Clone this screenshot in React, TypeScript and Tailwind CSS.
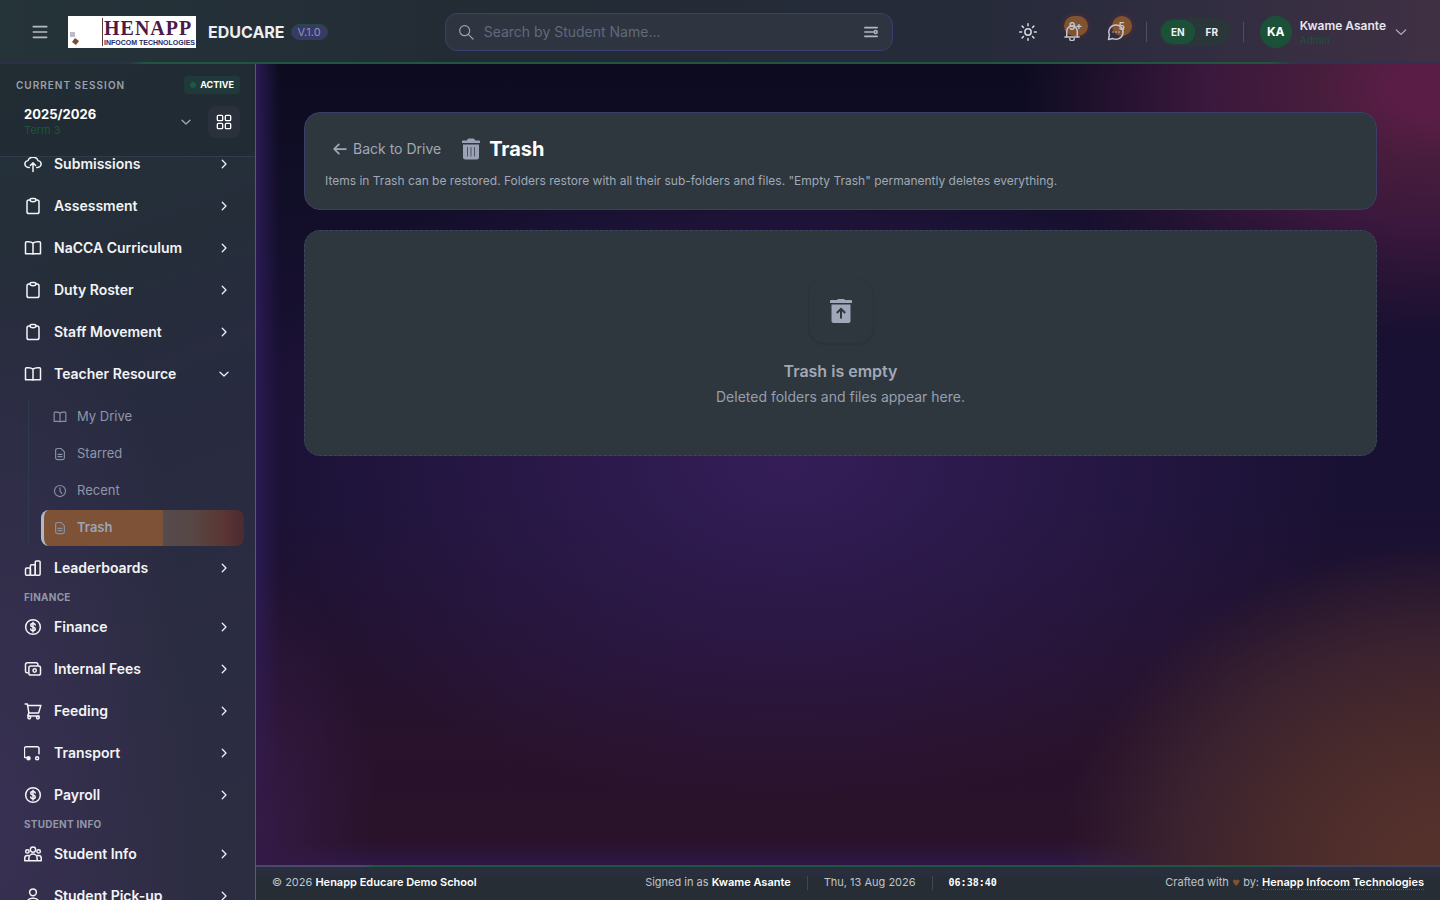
import { ReactNode } from "react";
import { clsx } from "clsx";

const paths: Record<string, ReactNode> = {
  upload: (
    <>
      <path d="M7 16.5H6a4.5 4.5 0 0 1-.6-9A6.6 6.6 0 0 1 12 3a6.6 6.6 0 0 1 6.6 4.5 4.5 4.5 0 0 1-.6 9h-1" />
      <path d="M12 22V10.500M8.500 14 12 10.500l3.500 3.500" />
    </>
  ),
  clipboard: (
    <>
      <path d="M8 4H6.500A2.500 2.500 0 0 0 4 6.500v13A2.500 2.500 0 0 0 6.500 22h11a2.500 2.500 0 0 0 2.500-2.500v-13A2.500 2.500 0 0 0 17.500 4H16" />
      <path d="M8 4c0-1.200.8-2 2-2h4c1.200 0 2 .8 2 2 0 1.200-1.600 2.200-4 2.200S8 5.200 8 4Z" />
    </>
  ),
  book: (
    <path d="M12 5.500V20M12 5.500C10.500 4.200 8.500 3.500 6 3.500H3.500A1.500 1.500 0 0 0 2 5v14.500h7c1.400 0 2.300.2 3 .5.700-.3 1.600-.5 3-.5h7V5a1.500 1.500 0 0 0-1.500-1.500H18c-2.500 0-4.500.7-6 2Z" />
  ),
  file: (
    <>
      <path d="M13.500 2.500h-6A3 3 0 0 0 4.500 5.500v13a3 3 0 0 0 3 3h9a3 3 0 0 0 3-3v-10Z" />
      <path d="M8.500 12.500h7M8.500 16.500h7" />
    </>
  ),
  clock: (
    <>
      <circle cx="12" cy="12" r="9.500" />
      <path d="M12 6.500V12l3 4" />
    </>
  ),
  bars: (
    <>
      <rect x="2" y="12" width="6.500" height="9.500" rx="1.500" />
      <rect x="8.500" y="7.500" width="6.500" height="14" rx="1.500" />
      <rect x="15" y="2.500" width="6.500" height="19" rx="1.500" />
    </>
  ),
  dollar: (
    <>
      <circle cx="12" cy="12" r="9.800" />
      <path d="M15 9.300c-.2-1.300-1.400-2-3-2s-3 .8-3 2.200c0 3.300 6 1.700 6 5 0 1.400-1.300 2.200-3 2.200s-2.900-.8-3-2.100M12 5.500v13" />
    </>
  ),
  cash: (
    <>
      <path d="M5 17H4a2 2 0 0 1-2-2V6a2.500 2.500 0 0 1 2.500-2.500H16A2.500 2.500 0 0 1 18.500 6v1" />
      <rect x="6.500" y="8" width="15.500" height="12" rx="2.500" />
      <circle cx="14.200" cy="14" r="2.200" />
    </>
  ),
  cart: (
    <>
      <path d="M1.500 2.500h3l2 12h13l3-10H5M6.500 14.500 5 18.500h15" />
      <circle cx="7" cy="20.800" r="1.800" />
      <circle cx="18.500" cy="20.800" r="1.800" />
    </>
  ),
  bus: (
    <>
      <path d="M3 18H2a1.500 1.500 0 0 1-1.500-1.500V6A2.500 2.500 0 0 1 3 3.500h14.500A2.500 2.500 0 0 1 20 6v7" />
      <circle cx="6" cy="19" r="2" fill="currentColor" />
      <circle cx="17.500" cy="19" r="2" />
    </>
  ),
  group: (
    <>
      <circle cx="12" cy="6" r="3.500" />
      <circle cx="4.500" cy="8.500" r="2.300" />
      <circle cx="19.500" cy="8.500" r="2.300" />
      <path d="M6.500 21v-3.500a5.500 5.500 0 0 1 11 0V21ZM6 14H4.500A3.500 3.500 0 0 0 1 17.500V21h22v-3.500a3.500 3.500 0 0 0-3.500-3.500H18" />
    </>
  ),
  user: (
    <>
      <circle cx="12" cy="7" r="4.500" />
      <path d="M4 22v-1a7 7 0 0 1 7-6h2a7 7 0 0 1 7 6v1" />
    </>
  ),
  right: <path d="m8.500 4.500 7.500 7.500-7.500 7.500" />,
  down: <path d="m4 8.500 8 7.500 8-7.500" />,
  back: <path d="M22 12H3M10 4l-8 8 8 8" />,
  menu: <path d="M2 4h20M2 12h20M2 20h20" />,
  search: (
    <>
      <circle cx="10" cy="10" r="7.500" />
      <path d="m15.500 15.500 7 7" />
    </>
  ),
  filter: (
    <>
      <path d="M1.500 4.500h21M1.500 12h14M1.500 19.500h21" />
      <circle cx="20" cy="12" r="2.500" />
    </>
  ),
  grid: (
    <>
      <rect x="2" y="2" width="8" height="8" rx="1.500" />
      <rect x="14" y="2" width="8" height="8" rx="1.500" />
      <rect x="2" y="14" width="8" height="8" rx="1.500" />
      <rect x="14" y="14" width="8" height="8" rx="1.500" />
    </>
  ),
  sun: (
    <>
      <circle cx="12" cy="12" r="4.200" />
      <path d="M12 1v2.500M12 20.500V23M1 12h2.500M20.500 12H23M4.200 4.200 6 6M18 18l1.800 1.800M4.200 19.800 6 18M18 6l1.800-1.800" />
    </>
  ),
  bell: (
    <>
      <path d="M5 18V11a7 7 0 0 1 14 0v7M2.500 18.500h19" />
      <path d="M9 20.500a3 3 0 0 0 6 0" />
    </>
  ),
  chat: (
    <>
      <path d="M2 22l1.200-6A9.500 9.500 0 1 1 8 20.800Z" />
      <path d="M8 12h.01M12 12h.01M16 12h.01" />
    </>
  ),
};

function Icon({ name, className, stroke = 2 }: { name: string; className: string; stroke?: number }) {
  return (
    <svg
      viewBox="0 0 24 24"
      fill="none"
      stroke="currentColor"
      strokeWidth={stroke}
      strokeLinecap="round"
      strokeLinejoin="round"
      className={clsx("shrink-0", className)}
      aria-hidden="true"
    >
      {paths[name]}
    </svg>
  );
}

function NavRow({ icon, label, open }: { icon: string; label: string; open?: boolean }) {
  return (
    <button className="flex h-[42px] w-full shrink-0 items-center gap-3 px-3 text-left text-sm font-semibold text-[#f3f4f6]">
      <Icon name={icon} className="size-[18px]" />
      <span className="flex-1">{label}</span>
      <span className="flex w-4 justify-center">
        <Icon name={open ? "down" : "right"} className="size-3" stroke={2.500} />
      </span>
    </button>
  );
}

function NavHeading({ children }: { children: ReactNode }) {
  return (
    <h2 className="h-[17px] px-3 text-[10px] leading-4 font-bold tracking-wide text-[#9197a8] uppercase">
      {children}
    </h2>
  );
}

const driveLinks = [
  { icon: "book", label: "My Drive" },
  { icon: "file", label: "Starred" },
  { icon: "clock", label: "Recent" },
  { icon: "file", label: "Trash", active: true },
];

function Sidebar() {
  return (
    <aside className="flex w-64 shrink-0 flex-col border-r border-[#565b76] bg-[radial-gradient(ellipse_at_0%_90%,#383052_0%,transparent_55%),linear-gradient(160deg,#23333a_0%,#252d39_25%,#282b40_45%,#2d2d42_100%)]">
      <div className="flex h-[93px] shrink-0 flex-col gap-3 border-b border-[#313b49] bg-[#202a32]/80 pt-3 pr-[15px] pl-4">
        <div className="flex h-[18px] items-center justify-between">
          <span className="text-[10px] font-semibold tracking-widest text-[#9ba0ad]">CURRENT SESSION</span>
          <span className="flex h-[18px] items-center gap-1 rounded bg-[#20393a] px-1.5 text-[9px] font-bold text-white">
            <i className="size-1.5 rounded-full bg-[#1d5b3b]" />
            ACTIVE
          </span>
        </div>
        <div className="flex items-center gap-2">
          <button className="flex flex-1 items-center justify-between px-2 text-left">
            <span className="flex flex-col">
              <span className="text-[13px] leading-4 font-bold text-white">2025/2026</span>
              <span className="text-[11px] leading-4 text-[#1d5438]">Term 3</span>
            </span>
            <Icon name="down" className="size-3 text-[#a5acb8]" stroke={2.500} />
          </button>
          <button aria-label="Apps" className="flex size-8 items-center justify-center rounded-lg bg-[#2b303d] text-white">
            <Icon name="grid" className="size-4" />
          </button>
        </div>
      </div>
      <nav className="min-h-0 flex-1 overflow-hidden pr-[11px] pl-3">
        <div className="-mt-3.5">
          <NavRow icon="upload" label="Submissions" />
          <NavRow icon="clipboard" label="Assessment" />
          <NavRow icon="book" label="NaCCA Curriculum" />
          <NavRow icon="clipboard" label="Duty Roster" />
          <NavRow icon="clipboard" label="Staff Movement" />
          <NavRow icon="book" label="Teacher Resource" open />
          <div className="pt-1 pb-px">
            <div className="ml-4 flex flex-col gap-px border-l border-[#2c3a4a] pl-3">
              {driveLinks.map((l) => (
                <a
                  key={l.label}
                  href="#"
                  className={clsx(
                    "flex h-9 items-center gap-2.5 overflow-hidden text-[13px]",
                    l.active
                      ? "rounded-lg border-l-3 border-[#b4b8c4] bg-[linear-gradient(90deg,#7d5236_59%,#554a4b_60%,#574745_74%,#5b3532_90%,#4b2a33_100%)] pl-[9px] font-semibold text-[#9ba5b8]"
                      : "pl-3 text-[#8f97a9]",
                  )}
                >
                  <Icon name={l.icon} className="size-3.5 text-[#8791a3]" />
                  {l.label}
                </a>
              ))}
            </div>
          </div>
          <NavRow icon="bars" label="Leaderboards" />
          <NavHeading>Finance</NavHeading>
          <NavRow icon="dollar" label="Finance" />
          <NavRow icon="cash" label="Internal Fees" />
          <NavRow icon="cart" label="Feeding" />
          <NavRow icon="bus" label="Transport" />
          <NavRow icon="dollar" label="Payroll" />
          <NavHeading>Student Info</NavHeading>
          <NavRow icon="group" label="Student Info" />
          <NavRow icon="user" label="Student Pick-up" />
        </div>
      </nav>
    </aside>
  );
}

function Logo() {
  return (
    <div className="flex h-8 w-32 overflow-hidden bg-white">
      <svg viewBox="0 0 36 32" className="h-8 w-9 shrink-0">
        <path d="M2 16h5v5H2z" fill="#b9bdc8" />
        <path d="m7 22 4 3-3 4-4-3z" fill="#76502f" />
        <path d="M34.500 2v28" stroke="#5c3b3b" />
      </svg>
      <div className="flex flex-col pt-px whitespace-nowrap">
        <span className="font-['Liberation_Serif',serif] text-xl leading-[22px] font-bold tracking-wider text-[#4d1a45]">
          HENAPP
        </span>
        <span className="font-['Liberation_Sans',sans-serif] text-[7px] leading-[7px] font-bold text-[#252a66]">
          INFOCOM TECHNOLOGIES
        </span>
      </div>
    </div>
  );
}

function NotifyButton({ icon, label, count, wide }: { icon: string; label: string; count: string; wide?: boolean }) {
  return (
    <button aria-label={label} className="relative flex size-9 items-center justify-center text-[#c3c6d0]">
      <span
        className={clsx(
          "absolute top-0.5 flex h-5 items-center justify-center rounded-full bg-[#82532f] text-[10px] font-bold shadow-[0_0_6px_#5a2d38]",
          wide ? "left-2.5 w-6" : "left-3.5 w-5",
        )}
      >
        {count}
      </span>
      <Icon name={icon} className="relative size-[18px]" />
    </button>
  );
}

function Header() {
  return (
    <header className="relative flex h-16 shrink-0 items-center justify-between bg-[linear-gradient(90deg,#253439_0%,#232b35_35%,#262b3a_68%,#302d40_82%,#403044_100%)] px-6">
      <div className="flex items-center gap-3">
        <button aria-label="Toggle menu" className="flex size-8 items-center justify-center text-[#b5bac5]">
          <Icon name="menu" className="size-4" stroke={2.500} />
        </button>
        <Logo />
        <div className="flex items-center gap-1.5">
          <span className="text-base font-bold text-[#eceef1]">EDUCARE</span>
          <span className="rounded-full border border-[#234a45] bg-[#373a66] px-1.5 text-[11px] leading-[14px] text-[#8e94b4]">
            V.1.0
          </span>
        </div>
      </div>
      <div className="flex h-[38px] w-full max-w-md items-center gap-2.5 rounded-xl border border-[#3b3f6d] bg-[#2f3441] px-3">
        <Icon name="search" className="size-4 text-[#9ba1ad]" stroke={1.800} />
        <input
          type="text"
          aria-label="Search by student name"
          placeholder="Search by Student Name..."
          className="min-w-0 flex-1 bg-transparent text-sm outline-none placeholder:text-[#606a7b]"
        />
        <button aria-label="Filters" className="p-0.5 text-[#b2b7c3]">
          <Icon name="filter" className="size-3.5" stroke={2.800} />
        </button>
      </div>
      <div className="flex items-center gap-3">
        <div className="flex gap-2">
          <button aria-label="Toggle theme" className="flex size-9 items-center justify-center text-[#d6d9e0]">
            <Icon name="sun" className="size-[18px]" />
          </button>
          <NotifyButton icon="bell" label="Notifications" count="9+" wide />
          <NotifyButton icon="chat" label="Messages" count="5" />
        </div>
        <div className="h-5 w-px bg-[#4b4d6b]" />
        <div className="flex rounded-full bg-[#2b363b] p-0.5 text-[10px] font-bold text-[#eef0f3]">
          <button className="h-6 w-[34px] rounded-full bg-[#1c5139]">EN</button>
          <button className="h-6 w-[34px]">FR</button>
        </div>
        <div className="h-5 w-px bg-[#4b4d6b]" />
        <button className="-ml-1 flex items-center gap-2 px-2 text-left">
          <span className="flex size-8 items-center justify-center rounded-full bg-[#1c5139] text-xs font-bold text-white">
            KA
          </span>
          <span className="flex flex-col whitespace-nowrap">
            <span className="text-xs leading-4 font-semibold text-[#e6e7ed]">Kwame Asante</span>
            <span className="text-[10px] leading-3 text-[#20523c]">Admin</span>
          </span>
          <Icon name="down" className="size-3.5 text-[#aeb2bf]" />
        </button>
      </div>
      <div className="absolute inset-x-0 bottom-0 h-0.5 bg-[linear-gradient(90deg,#2c3144_9%,#1e5640_10%,#1e5640_88%,#33304c_90%)]" />
    </header>
  );
}

function TrashIcon() {
  return (
    <svg viewBox="0 0 20 22" className="h-[22px] w-5" aria-hidden="true">
      <path
        d="M6 2.500C6 1.200 7 .5 8 .5h4c1 0 2 .7 2 2h4a1 1 0 0 1 1 1V5H1V3.500a1 1 0 0 1 1-1Z"
        fill="#9ba2b5"
      />
      <path d="M2 6.500h16V19a2.500 2.500 0 0 1-2.500 2.500h-11A2.500 2.500 0 0 1 2 19Z" fill="#9ba2b5" />
      <path d="M6.500 9v9.500M10 9v9.500M13.500 9v9.500" stroke="#4b5563" />
    </svg>
  );
}

function Content() {
  return (
    <main className="flex min-h-0 flex-1 flex-col gap-5 bg-[#191133] bg-[radial-gradient(ellipse_420px_250px_at_100%_3%,#5a1d46_12%,#471d3c_30%,#3b183d_55%,transparent_100%),radial-gradient(ellipse_380px_320px_at_100%_100%,#55312b_10%,#4a2b2b_40%,#3a222f_70%,transparent_100%),radial-gradient(ellipse_120px_260px_at_0%_95%,#341a45_0%,transparent_100%),linear-gradient(90deg,#2a1a52_0%,transparent_2%),radial-gradient(ellipse_560px_340px_at_45%_50%,#351e58_0%,transparent_100%),linear-gradient(180deg,#0c0b20_0%,#110e27_15%,transparent_38%),linear-gradient(0deg,#2d1846_0%,#29122a_3%,#28122c_16%,transparent_45%)] pt-12 pr-[63px] pl-12">
      <section className="rounded-2xl border border-[#393f69] bg-[#2d373d] p-5">
        <div className="flex h-8 items-center gap-3">
          <a href="#" className="flex items-center gap-1.5 px-2 text-sm text-[#a2a8b7]">
            <Icon name="back" className="size-3.5" stroke={3} />
            Back to Drive
          </a>
          <h1 className="flex items-center gap-2 text-xl font-bold text-white">
            <TrashIcon />
            Trash
          </h1>
        </div>
        <p className="mt-2 text-xs text-[#a2a8b7]">
          Items in Trash can be restored. Folders restore with all their sub-folders and files. "Empty Trash"
          permanently deletes everything.
        </p>
      </section>
      <section className="flex flex-col items-center rounded-2xl border border-dashed border-[#3d4560] bg-[#2d373d] py-12">
        <div className="flex size-16 items-center justify-center rounded-2xl shadow-[0_1px_1px_1px_#293341]">
          <svg viewBox="0 0 22 24" className="h-6 w-[22px]" aria-hidden="true">
            <path d="M1 1h6l1-1h6l1 1h6a1 1 0 0 1 1 1v2H0V2a1 1 0 0 1 1-1Z" fill="#a0a7b8" />
            <path d="M1.500 5.500h19V22a2 2 0 0 1-2 2h-15a2 2 0 0 1-2-2Z" fill="#a0a7b8" />
            <path d="M11 19.500V10.500M6.800 14 11 9.800l4.200 4.200" fill="none" stroke="#2d373d" strokeWidth="2" />
          </svg>
        </div>
        <h2 className="mt-4 text-base font-semibold text-[#a2a8b7]">Trash is empty</h2>
        <p className="mt-1 text-sm text-[#989eae]">Deleted folders and files appear here.</p>
      </section>
    </main>
  );
}

function Footer() {
  return (
    <footer className="relative flex h-[35px] shrink-0 items-center justify-between bg-[linear-gradient(180deg,#2b2f42_0%,#262d35_50%)] px-4 text-[11px] text-[#bfc4cd]">
      <div className="absolute inset-x-0 top-0 h-0.5 bg-[linear-gradient(90deg,#474b67_9%,#1e5640_10%,#1e5640_85%,#3c4260_88%)]" />
      <p>
        © 2026 <b className="font-semibold text-white">Henapp Educare Demo School</b>
      </p>
      <div className="flex items-center gap-4">
        <span>
          Signed in as <b className="font-semibold text-white">Kwame Asante</b>
        </span>
        <i className="h-3.5 w-px bg-[#414756]" />
        <span>Thu, 13 Aug 2026</span>
        <i className="h-3.5 w-px bg-[#414756]" />
        <time className="font-['DejaVu_Sans_Mono',monospace] text-[10px] font-bold text-white">06:38:40</time>
      </div>
      <p>
        Crafted with <span className="font-['DejaVu_Sans',sans-serif] text-[9px] text-[#82532f]">♥</span> by:{" "}
        <a href="#" className="border-b border-dotted border-[#4d5377] font-semibold text-white">
          Henapp Infocom Technologies
        </a>
      </p>
    </footer>
  );
}

export default function App() {
  return (
    <div className="flex h-screen flex-col overflow-hidden bg-[#151031] font-['Inter',sans-serif]">
      <Header />
      <div className="flex min-h-0 flex-1">
        <Sidebar />
        <div className="flex min-w-0 flex-1 flex-col">
          <Content />
          <Footer />
        </div>
      </div>
    </div>
  );
}
